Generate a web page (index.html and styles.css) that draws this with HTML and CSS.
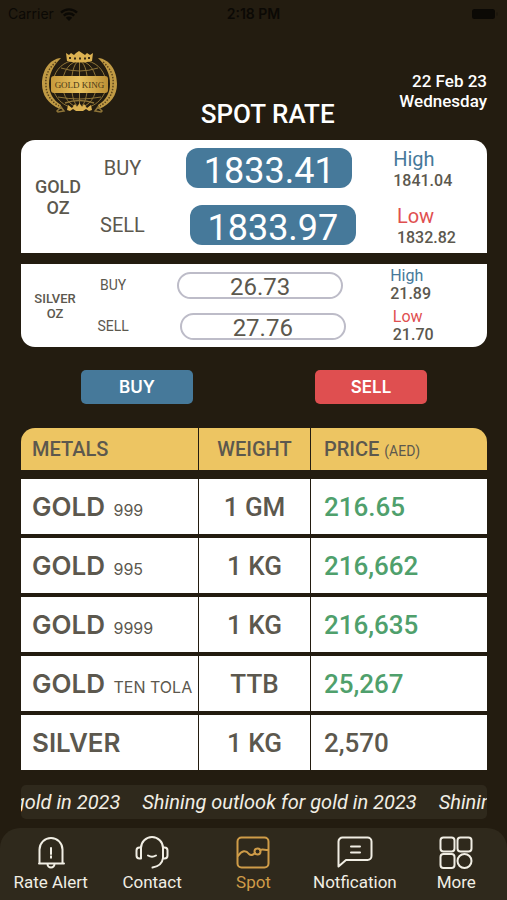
FILE: index.html
```html
<!DOCTYPE html>
<html lang="en">
<head>
<meta charset="utf-8">
<meta name="viewport" content="width=device-width, initial-scale=1">
<title>Spot Rate</title>
<link rel="stylesheet" href="styles.css">
</head>
<body>
<div class="app">
  <div class="status">
    <span class="carrier">Carrier
      <svg width="18" height="13" viewBox="0 0 18 13" aria-hidden="true"><path d="M1 4.6a11.5 11.5 0 0 1 16 0M3.8 7.6a7.5 7.5 0 0 1 10.4 0" fill="none" stroke="currentColor" stroke-width="2.4"/><path d="M9 13 5.8 9.7a4.6 4.6 0 0 1 6.4 0z" fill="currentColor"/></svg>
    </span>
    <span class="clock">2:18 PM</span>
    <svg class="battery" width="28" height="12" viewBox="0 0 28 12" aria-hidden="true"><rect x="1" y="1" width="23" height="10" rx="2.5" fill="currentColor"/><path d="M26 4.5v3" stroke="currentColor" stroke-opacity=".5"/></svg>
  </div>

  <header class="header">
    <svg class="logo" width="77" height="62" viewBox="0 0 77 62" role="img" aria-label="Gold King">
      <defs>
        <linearGradient id="gold" x1="0" y1="0" x2="1" y2="0"><stop offset="0" stop-color="#c79a3c"/><stop offset=".5" stop-color="#e8c25f"/><stop offset="1" stop-color="#bd9035"/></linearGradient>
      </defs>
      <g fill="none" stroke="#8f7538" stroke-width="1">
        <path d="M13 26C17 14 27 9 38.500 9S60 14 64 26M13 41c4 9 10 13 16 15M64 41c-4 9-10 13-16 15"/>
        <ellipse cx="38.500" cy="33" rx="17" ry="23"/>
        <ellipse cx="38.500" cy="33" rx="8" ry="23"/>
        <path d="M20 17q18.500 6 37 0M38.500 9v44M17 46q21.500 4 43 0"/>
      </g>
      <path d="M25 2l3 2 2-2 3 2 2-2 3-2 3 2 3 2 2-2 3 2 3-2-1 8q-12.500 3-25 0z" fill="#dcb252"/>
      <path d="M28 6h2v2h-2zM33 6.500h2v2h-2zM38 6.500h2v2h-2zM43 6.500h2v2h-2zM47 6h2v2h-2z" fill="#3a2c14"/>
      <path d="M20 7C8 8 1 20 1 33c0 11 6 20 18 25l1-4C12 49 8 42 8 33c0-10 4-18 12-26zM57 7c12 1 19 13 19 26 0 11-6 20-18 25l-1-4c8-5 12-12 12-21 0-10-4-18-12-26z" fill="#c09a44"/>
      <path d="M15 11C7 18 4 25 5 34c0 8 4 16 13 21M62 11c8 7 11 14 10 23 0 8-4 16-13 21" fill="none" stroke="#5b441b" stroke-width="1.500" stroke-dasharray="1.500 1.500"/>
      <rect x="10" y="25" width="57" height="17" rx="3" fill="url(#gold)"/>
      <path d="M24 52q14.500-5 29 0M16 60l4-4 3 4-6 1zM61 60l-4-4-3 4 6 1z" fill="none" stroke="#8f7538" stroke-width="1.500"/>
      <path d="M26 59l1-5 4 3 3-4 2 3 2.500-4 2.500 4 2-3 3 4 4-3 1 5-3 1-3-2-3 2h-7l-3-2-3 2z" fill="#dcb252"/>
      <text x="38.500" y="37" text-anchor="middle" class="logo-text">GOLD KING</text>
    </svg>
    <h1 class="title">SPOT RATE</h1>
    <div class="date">22 Feb 23<br>Wednesday</div>
  </header>

  <main class="main">
    <section class="card card-gold">
      <h2 class="card-name">GOLD<br>OZ</h2>
      <div class="quotes">
        <div class="quote"><span class="side">BUY</span><span class="pill">1833.41</span><div class="range"><span class="high">High</span><b>1841.04</b></div></div>
        <div class="quote"><span class="side">SELL</span><span class="pill">1833.97</span><div class="range"><span class="low">Low</span><b>1832.82</b></div></div>
      </div>
    </section>
    <section class="card card-silver">
      <h2 class="card-name">SILVER<br>OZ</h2>
      <div class="quotes">
        <div class="quote"><span class="side">BUY</span><span class="pill">26.73</span><div class="range"><span class="high">High</span><b>21.89</b></div></div>
        <div class="quote"><span class="side">SELL</span><span class="pill">27.76</span><div class="range"><span class="low">Low</span><b>21.70</b></div></div>
      </div>
    </section>

    <div class="actions">
      <button type="button" class="btn btn-buy">BUY</button>
      <button type="button" class="btn btn-sell">SELL</button>
    </div>

    <table class="rates">
      <thead>
        <tr><th scope="col" class="metal">METALS</th><th scope="col" class="weight">WEIGHT</th><th scope="col" class="price">PRICE <small>(AED)</small></th></tr>
      </thead>
      <tbody>
        <tr><td class="metal">GOLD <small>999</small></td><td class="weight">1 GM</td><td class="price up">216.65</td></tr>
        <tr><td class="metal">GOLD <small>995</small></td><td class="weight">1 KG</td><td class="price up">216,662</td></tr>
        <tr><td class="metal">GOLD <small>9999</small></td><td class="weight">1 KG</td><td class="price up">216,635</td></tr>
        <tr><td class="metal">GOLD <small>TEN TOLA</small></td><td class="weight">TTB</td><td class="price up">25,267</td></tr>
        <tr><td class="metal">SILVER</td><td class="weight">1 KG</td><td class="price">2,570</td></tr>
      </tbody>
    </table>

    <div class="ticker">
      <div class="ticker-track"><span>Shining outlook for gold in 2023</span><span>Shining outlook for gold in 2023</span><span>Shining outlook for gold in 2023</span></div>
    </div>
  </main>

  <nav class="nav">
    <a href="#alert"><svg viewBox="0 0 36 36" aria-hidden="true"><path d="M6.500 29.500V15.500a11.500 11.500 0 0 1 23 0v14M6 29.500h25M14.500 30a3.500 3.500 0 0 0 7 0M18 14v6M18 22.200v1.600"/></svg>Rate Alert</a>
    <a href="#contact"><svg viewBox="0 0 36 36" aria-hidden="true"><path d="M7 14a11 11 0 0 1 22 0v10q-1 8-10.500 9.500M7 13.500H5.500a3 3 0 0 0-3 3v5a3 3 0 0 0 3 3H7zM29 13.500h1.500a3 3 0 0 1 3 3v5a3 3 0 0 1-3 3H29zM14 21.500q4 2.500 8 0"/></svg>Contact</a>
    <a href="#spot" class="active" aria-current="page"><svg viewBox="0 0 36 36" aria-hidden="true"><rect x="2.500" y="3.500" width="31" height="30" rx="4"/><path d="M3 22c4-6 8-6 11-2 2 2 4 1 6-1"/><circle cx="22.500" cy="17.500" r="3"/><path d="M25 16c3-1 4 0 8 0"/></svg>Spot</a>
    <a href="#notification"><svg viewBox="0 0 36 36" aria-hidden="true"><path d="M1.500 32.500V7.500a4 4 0 0 1 4-4h25a4 4 0 0 1 4 4V22a4 4 0 0 1-4 4H9zM14 12.500h9M14 18.500h9"/></svg>Notfication</a>
    <a href="#more"><svg viewBox="0 0 36 36" aria-hidden="true"><rect x="2.500" y="3.500" width="14" height="14" rx="3"/><rect x="19.500" y="3.500" width="14" height="14" rx="3"/><rect x="2.500" y="20" width="14" height="14" rx="3"/><circle cx="26.500" cy="27" r="7"/></svg>More</a>
  </nav>
</div>
</body>
</html>
```
FILE: styles.css
```css
:root {
  --bg: #231c10;
  --panel: #2f291c;
  --ink: #5c584e;
  --blue: #46799a;
  --red: #df4f50;
  --green: #4fa06c;
  --gold: #edc562;
}

* { box-sizing: border-box; }

body {
  margin: 0;
  background: var(--bg);
  color: var(--ink);
  font-family: Roboto, "Liberation Sans", sans-serif;
}

.app {
  min-height: 100vh;
  display: flex;
  flex-direction: column;
}

.status {
  display: grid;
  grid-template-columns: 1fr auto 1fr;
  align-items: center;
  height: 28px;
  padding: 0 8px;
  color: #0b0905;
  font: 14px/20px Inter, sans-serif;
}
.carrier { display: flex; align-items: center; gap: 6px; }
.clock { font-weight: 600; }
.battery { justify-self: end; }

.header {
  display: flex;
  align-items: flex-end;
  height: 112px;
  padding: 0 20px 12px 41px;
  color: #fff;
}
.logo { flex: none; margin-bottom: 15px; }
.logo-text { font: 9px "Liberation Serif", serif; fill: #4a3715; }
.title {
  flex: 1;
  margin: 0;
  padding-left: 18px;
  text-align: center;
  font-size: 26px;
  line-height: 28px;
  font-weight: 500;
}
.date {
  margin-bottom: 17px;
  text-align: right;
  font-size: 17px;
  line-height: 20px;
  font-weight: 500;
}

.main { padding: 0 20px 0 21px; }

.card { display: flex; align-items: center; background: #fff; }
.card-name { flex: none; width: 74px; margin: 0; text-align: center; font-weight: 500; }
.quotes { flex: 1; display: flex; flex-direction: column; }
.quote { display: flex; justify-content: center; align-items: center; }
.side { margin-right: 4px; }
.pill { width: 166px; text-align: center; }
.range { display: flex; flex-direction: column; }
.range b { font-size: 16px; font-weight: 500; }
.high { color: var(--blue); }
.low { color: var(--red); }

.card-gold { height: 113px; border-radius: 14px 14px 0 0; }
.card-gold .card-name { font-size: 18px; line-height: 21px; }
.card-gold .quotes { gap: 17px; padding-right: 26px; }
.card-gold .quote { gap: 41px; height: 40px; font-size: 20px; line-height: 21px; }
.card-gold .range { padding-top: 4px; }
.card-gold .pill {
  border-radius: 12px;
  background: var(--blue);
  color: #fff;
  font-size: 36px;
  line-height: 46px;
  height: 40px;
}

.card-silver { height: 83px; margin-top: 11px; border-radius: 0 0 14px 14px; }
.card-silver .card-name { width: 68px; font-size: 13px; line-height: 15px; }
.card-silver .quotes { gap: 5px; padding-right: 45px; }
.card-silver .quote { gap: 47px; height: 36px; font-size: 16px; line-height: 18px; }
.card-silver .side { font-size: 14px; }
.card-silver .pill {
  height: 27px;
  border: 2px solid #bdbcc8;
  border-radius: 14px;
  font-size: 24px;
  line-height: 26px;
}

.actions { display: flex; justify-content: space-between; padding: 23px 60px 24px; }
.btn {
  width: 112px;
  height: 34px;
  padding: 0;
  border: 0;
  border-radius: 5px;
  color: #fff;
  font: 600 17px/34px Inter, sans-serif;
}
.btn-buy { background: var(--blue); }
.btn-sell { background: var(--red); }

.rates { width: 100%; table-layout: fixed; border-collapse: separate; border-spacing: 0; }
.rates th { height: 51px; padding: 0; border-bottom: 9px solid var(--bg); background: var(--gold); background-clip: padding-box; font-size: 20px; font-weight: 500; text-align: left; }
.rates td { height: 59px; padding: 0; border-bottom: 4px solid var(--bg); background: #fff; font-size: 26px; font-weight: 500; }
.rates tr:last-child td { height: 55px; border-bottom: 0; }
.rates th:first-child { border-top-left-radius: 14px; }
.rates th:last-child { border-top-right-radius: 14px; }
.rates .metal { width: 38%; padding-left: 11px; white-space: nowrap; }
.rates .weight { width: 24%; text-align: center; border-left: 1px solid var(--bg); }
.rates .price { padding-left: 13px; border-left: 1px solid var(--bg); }
.rates td.metal { font-family: Inter, sans-serif; font-weight: 600; }
.rates small { font-size: 14px; font-weight: 400; }
.rates td small { margin-left: 2px; font-size: 16px; font-weight: 400; }
.rates .up { color: var(--green); }

.ticker {
  overflow: hidden;
  margin-top: 15px;
  border-radius: 5px;
  background: var(--panel);
  color: #f1eee4;
  font-size: 20px;
  line-height: 34px;
  font-style: italic;
}
.ticker-track { display: flex; gap: 22px; margin-left: -175px; white-space: nowrap; }

.nav {
  display: grid;
  grid-template-columns: repeat(5, 1fr);
  margin-top: auto;
  height: 72px;
  padding-top: 6px;
  border-radius: 20px 20px 0 0;
  background: var(--panel);
}
.nav a {
  display: flex;
  flex-direction: column;
  align-items: center;
  color: #f1eee4;
  font-size: 17px;
  line-height: 24px;
  text-decoration: none;
}
.nav svg { width: 36px; height: 36px; fill: none; stroke: currentColor; stroke-width: 2; stroke-linejoin: round; stroke-linecap: round; }
.nav .active { color: #cf9c48; }
```
